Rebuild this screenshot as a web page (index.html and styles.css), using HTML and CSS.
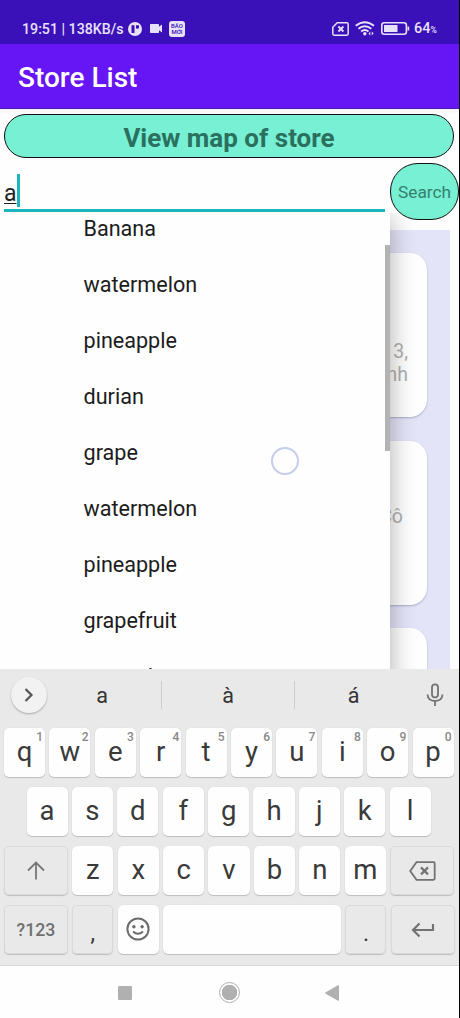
FILE: index.html
```html
<!DOCTYPE html>
<html lang="vi">
<head>
<meta charset="utf-8">
<title>Store List</title>
<link rel="stylesheet" href="styles.css">
</head>
<body>
<div class="screen">
  <div class="status">
    <span class="clock">19:51 | 138KB/s</span>
    <svg class="st-app" width="14" height="14" viewBox="0 0 14 14"><circle cx="7" cy="7" r="7" fill="#e8e1fa"/><path d="M3.500 11V3.200h3V11zM8 3.200h3v2.600q-1.200 1.600-3 .4z" fill="#3a10b9"/></svg>
    <svg class="st-cam" width="12" height="9" viewBox="0 0 12 9"><path d="M.8 0h7.400q.8 0 .8.8v2L12 .6v7.800L9 6.200v2q0 .8-.8.8H.8Q0 9 0 8.200V.8Q0 0 .8 0z" fill="#e8e1fa"/></svg>
    <span class="badge"><span>BÁO</span><span>MỚI</span></span>
    <span class="grow"></span>
    <svg class="st-sim" width="17" height="14" viewBox="0 0 17 14" fill="none" stroke="#e8e1fa" stroke-width="1.500"><path d="M5.200.8h9.600q1.400 0 1.400 1.400v9.600q0 1.400-1.400 1.400H2.200Q.8 13.200.8 11.800V5.200z"/><path d="M6.400 4.500l5 5M11.400 4.500l-5 5" stroke-width="1.800"/></svg>
    <svg class="st-wifi" width="20" height="15" viewBox="0 0 20 15" fill="none" stroke="#e8e1fa" stroke-width="1.900"><path d="M.7 4.800Q9.800-2.400 19 4.800M3.400 7.800Q9.800 2.600 16.300 7.800M6.100 10.500Q9.800 7.300 13.500 10.500"/><circle cx="9.800" cy="12.800" r="1.700" fill="#e8e1fa" stroke="none"/><path d="M15.300 14.500v-4l-1.800 2.200zM16.800 10.500v4l1.800-2.200z" fill="#e8e1fa" stroke="none"/></svg>
    <svg class="st-bat" width="29" height="13" viewBox="0 0 29 13"><rect x=".8" y=".8" width="24.600" height="11.400" rx="2.500" fill="none" stroke="#e8e1fa" stroke-width="1.600"/><rect x="3" y="3" width="13.500" height="7" rx=".5" fill="#e8e1fa"/><path d="M26.500 4.500h1.700v4h-1.700z" fill="#e8e1fa"/></svg>
    <span class="pct">64<small>%</small></span>
  </div>
  <div class="appbar">Store List</div>

  <main class="content">
    <button class="map-btn">View map of store</button>
    <div class="search-row">
      <div class="field"><span class="typed">a</span><span class="caret"></span></div>
      <button class="search-btn">Search</button>
    </div>
    <div class="stores">
      <div class="card first"><p>Quận 3,<br>Hồ Chí Minh</p></div>
      <div class="card second"><p>Cầu Cô</p></div>
      <div class="card"></div>
    </div>
    <div class="clip">
      <ul class="dropdown">
        <li>Banana</li><li>watermelon</li><li>pineapple</li><li>durian</li><li>grape</li>
        <li>watermelon</li><li>pineapple</li><li>grapefruit</li><li>avocado</li>
      </ul>
      <span class="scrollbar"></span>
      <span class="touch"></span>
    </div>
  </main>

  <div class="keyboard">
    <div class="suggest">
      <span class="more"><svg width="10" height="14" viewBox="0 0 10 14" fill="none" stroke="#555" stroke-width="2.200"><path d="M1.500 1l6 6-6 6"/></svg></span>
      <span class="word">a</span><span class="word">à</span><span class="word">á</span>
      <svg class="mic" width="18" height="24" viewBox="0 0 18 24" fill="none" stroke="#737373" stroke-width="1.800"><rect x="6" y="1.400" width="6" height="13" rx="2.800"/><path d="M1.500 11.500q.5 6.500 7.500 6.500t7.500-6.500M9 18v5"/></svg>
    </div>
    <div class="keys">
      <span class="key">q<sup>1</sup></span><span class="key">w<sup>2</sup></span><span class="key">e<sup>3</sup></span><span class="key">r<sup>4</sup></span><span class="key">t<sup>5</sup></span><span class="key">y<sup>6</sup></span><span class="key">u<sup>7</sup></span><span class="key">i<sup>8</sup></span><span class="key">o<sup>9</sup></span><span class="key">p<sup>0</sup></span>
    </div>
    <div class="keys inset">
      <span class="key">a</span><span class="key">s</span><span class="key">d</span><span class="key">f</span><span class="key">g</span><span class="key">h</span><span class="key">j</span><span class="key">k</span><span class="key">l</span>
    </div>
    <div class="keys">
      <span class="key wide dim"><svg width="18" height="20" viewBox="0 0 18 20" fill="none" stroke="#777" stroke-width="1.800"><path d="M9 18.500V1.500M1 9.500l8-8 8 8"/></svg></span>
      <span class="key">z</span><span class="key">x</span><span class="key">c</span><span class="key">v</span><span class="key">b</span><span class="key">n</span><span class="key">m</span>
      <span class="key wide dim"><svg width="27" height="20" viewBox="0 0 27 20" fill="none" stroke="#737373" stroke-width="1.800"><path d="M7.500 1.200H24.500q1.200 0 1.200 1.200V17.600q0 1.200-1.200 1.200H7.500L1.200 10z"/><path d="M12 6.400l7 7M19 6.400l-7 7" stroke-width="2.200"/></svg></span>
    </div>
    <div class="keys">
      <span class="key wide dim sym">?123</span>
      <span class="key dim punct">,</span>
      <span class="key"><svg width="24" height="24" viewBox="0 0 24 24" fill="none" stroke="#6c6c6c" stroke-width="2"><circle cx="12" cy="12" r="10.600"/><path d="M7 14.500q5 4.600 10 0"/><g fill="#6c6c6c" stroke="none"><circle cx="7.900" cy="9.700" r="1.700"/><circle cx="16.100" cy="9.700" r="1.700"/></g></svg></span>
      <span class="key space"></span>
      <span class="key dim punct">.</span>
      <span class="key wide dim"><svg width="24" height="16" viewBox="0 0 24 16" fill="none" stroke="#737373" stroke-width="2.200"><path d="M22 2v6H2M8.500 1.500L2 8l6.500 6.500"/></svg></span>
    </div>
  </div>
  <div class="nav">
    <span class="recent"></span>
    <span class="home"></span>
    <svg class="back" width="14" height="16" viewBox="0 0 14 16"><path d="M.8 7.300L13 .3q1-.5 1 .6v14.200q0 1.100-1 .6L.8 8.700q-1.200-.7 0-1.400z" fill="#b0b0b0"/></svg>
  </div>
</div>
</body>
</html>
```
FILE: styles.css
```css
* { box-sizing: border-box; }
body { margin: 0; background: #000; font-family: Roboto, "Noto Sans", sans-serif; }
button { font-family: inherit; padding: 0; border: 1.500px solid #111; background: #77f0d3; }
.screen { width: 459px; height: 1018px; display: flex; flex-direction: column; overflow: hidden; background: #fefefe; }

.status { height: 44px; flex: none; background: #3a10b9; color: #e8e1fa; display: flex; align-items: center; padding: 13px 22px 0; }
.clock { font-size: 14.200px; font-weight: 500; width: 102px; white-space: nowrap; }
.st-app { margin-left: 4px; }
.st-cam { margin-left: 8px; }
.badge { width: 16px; height: 16px; margin-left: 7px; border-radius: 3px; background: #e8e1fa; color: #3a10b9; display: flex; flex-direction: column; align-items: center; justify-content: center; font-size: 6px; line-height: 6px; font-weight: 500; }
.grow { flex: 1; }
.st-wifi { margin-left: 6px; }
.st-bat { margin-left: 6px; }
.pct { margin-left: 4px; font-size: 14.500px; line-height: 17px; padding-top: 1px; font-weight: 500; width: 23px; white-space: nowrap; }
.pct small { font-size: 8.500px; }

.appbar { height: 65px; flex: none; background: #6615f4; color: #fff; font-size: 28px; font-weight: 500; line-height: 68px; padding-left: 18px; border-bottom: 1px solid #4a1eaa; }

.content { position: relative; height: 560px; flex: none; overflow: hidden; display: flex; flex-direction: column; padding-top: 5px; background: linear-gradient(#f3f1f6, #fefefe 5px); }
.map-btn { width: 450px; height: 44px; flex: none; margin-left: 4px; border-radius: 22px; font-size: 26px; font-weight: 700; color: #2b705f; line-height: 42px; padding-top: 2px; }
.search-row { height: 57px; flex: none; margin-top: 5px; display: flex; }
.field { width: 381px; height: 49px; margin-left: 4px; border-bottom: 3px solid #1bb5bb; display: flex; align-items: flex-start; }
.typed { font-size: 23px; line-height: 30px; color: #222; margin-top: 16px; text-decoration: underline; text-decoration-thickness: 1px; text-underline-offset: 2px; }
.caret { width: 3px; height: 33px; margin-top: 11px; background: #1bb5bb; }
.search-btn { width: 69px; height: 57px; margin-left: 5px; border-radius: 28px; font-size: 17.300px; color: #35806f; padding-top: 1px; }
.stores { width: 450px; flex: 1; margin-top: 10px; background: #e4e4f8; padding: 23px 23.500px 0; display: flex; flex-direction: column; gap: 23.500px; }
.card { height: 164px; flex: none; border-radius: 17px; background: #fefefe; box-shadow: 0 1px 2px rgba(60,60,100,.35); text-align: right; color: #b0b0b0; font-size: 19.500px; line-height: 22.500px; }
.card p { margin: 0 18.500px; }
.first p { padding-top: 88px; }
.second p { padding-top: 65px; margin-right: 23.500px; }

.clip { position: absolute; left: 0; top: 104px; width: 440px; height: 456px; overflow: hidden; }
.dropdown { list-style: none; margin: 0; padding: 0 0 0 83.500px; width: 390px; height: 500px; overflow: hidden; border-radius: 2px; background: #fefefe; box-shadow: 0 4px 26px rgba(0,0,0,.32); font-size: 21.600px; color: #1c1c1c; }
.dropdown li { height: 56px; line-height: 56px; }
.dropdown li:first-child { margin-top: -12px; }
.scrollbar { position: absolute; left: 385px; top: 32px; width: 5px; height: 206px; background: #b3b3b3; }
.touch { position: absolute; left: 271px; top: 234px; width: 28px; height: 28px; border-radius: 50%; border: 2px solid #c6cceb; }

.keyboard { height: 297px; flex: none; background: #e9e9e9; border-bottom: 1px solid #d8d8d8; padding: 0 4px; display: flex; flex-direction: column; gap: 10px; }
.suggest { height: 49px; flex: none; display: flex; align-items: center; padding: 3px 0 0 7px; }
.more { width: 36px; height: 36px; border-radius: 50%; background: #f2f2f2; box-shadow: 0 1px 2px rgba(0,0,0,.28); display: flex; align-items: center; justify-content: center; margin-right: -4px; }
.word { width: 118px; height: 28px; font-size: 21.500px; line-height: 29px; text-align: center; color: #333; }
.word + .word { width: 133px; border-left: 1px solid #ccc; }
.word:nth-child(4) { width: 118px; }
.mic { margin-left: 14px; }
.keys { height: 49px; flex: none; display: flex; gap: 4.300px; }
.keys.inset { padding-left: 22.500px; }
.key { position: relative; width: 41.100px; height: 49px; flex: none; border-radius: 5px; background: #fefefe; box-shadow: 0 1px 1px #bdbdbd, 0 0 1px #ccc; display: flex; align-items: center; justify-content: center; font-size: 27.500px; line-height: 46px; padding-bottom: 2px; color: #3a3a3a; }
.key sup { position: absolute; right: 2px; top: 3px; font-size: 12px; line-height: 13px; font-weight: 500; color: #888; }
.wide { width: 64px; padding-bottom: 0; }
.dim { background: #e9e9e9; box-shadow: 0 1px 1px #bdbdbd, inset 0 0 0 1px #d9d9d9; }
.space { width: 178px; }
.sym { font-size: 17.700px; font-weight: 500; color: #707070; }
.punct { font-size: 23px; padding-top: 10px; }

.nav { flex: 1; display: flex; align-items: center; padding-left: 118px; padding-top: 1px; }
.recent { width: 14px; height: 14px; background: #b0b0b0; border-radius: 1px; }
.home { width: 21px; height: 21px; margin-left: 86.500px; border-radius: 50%; border: 1.500px solid #b0b0b0; background: radial-gradient(circle, #b0b0b0 7.500px, #fefefe 8px); }
.back { margin-left: 85.500px; }
```
